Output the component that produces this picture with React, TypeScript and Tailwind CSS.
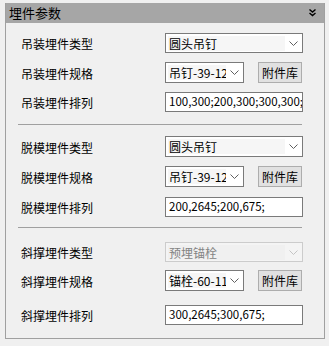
import React from 'react';

const cjk = { fontFamily: '"Noto Sans CJK SC", "Noto Sans", sans-serif' };

function Arrow({ disabled }: { disabled?: boolean }) {
  return (
    <svg width="9" height="5" viewBox="0 0 9 5" className="shrink-0">
      <path d="M0.5 0.5 L4.5 4.5 L8.5 0.5" fill="none" stroke={disabled ? '#c4c4c4' : '#606060'} strokeWidth="1" />
    </svg>
  );
}

function Combo({ text, small, disabled }: { text: string; small?: boolean; disabled?: boolean }) {
  return (
    <div
      className={`flex h-full items-center border ${disabled ? 'border-[#cccccc] bg-[#f4f4f4]' : 'border-[#7a7a7a] bg-white'} ${small ? 'w-[79px]' : 'w-[138px]'}`}
    >
      <div
        className={`ml-[2px] h-[15px] flex-1 overflow-hidden whitespace-nowrap pl-[1px] text-[12px] leading-[15px] ${disabled ? 'text-[#838383] bg-[#f0f0f0]' : 'text-black bg-[#f6f6f6]'}`}
      >
        {text}
      </div>
      <div className="flex w-[17px] justify-center">
        <Arrow disabled={disabled} />
      </div>
    </div>
  );
}

function Input({ value }: { value: string }) {
  return (
    <div className="flex h-full w-[138px] items-center overflow-hidden whitespace-nowrap border border-[#7a7a7a] bg-white pl-[3px] text-[11.5px] text-black">
      {value}
    </div>
  );
}

function Button() {
  return (
    <div className="ml-[14px] flex h-full w-[44px] items-center justify-center border border-[#adadad] bg-[#e1e1e1] text-[12px] text-black">
      附件库
    </div>
  );
}

function Row({ label, h, mt, children }: { label: string; h: string; mt: string; children: React.ReactNode }) {
  return (
    <div className={`flex items-center ${h} ${mt}`}>
      <div className="ml-[15px] w-[144px] pt-[2px] text-[12px] text-black">{label}</div>
      <div className="flex h-full items-center">{children}</div>
    </div>
  );
}

function Sep({ mt }: { mt: string }) {
  return <div className={`ml-[12px] h-px w-[284px] bg-[#a0a0a0] ${mt}`} />;
}

export default function App() {
  return (
    <div className="h-[346px] w-[329px] bg-[#f0f0f0] pt-[3px]" style={cjk}>
      <div className="ml-[5px] h-[336px] w-[320px] border border-t-0 border-[#a0a0a0]">
        <div className="flex h-[20px] items-center justify-between bg-[#a6a6a6] pl-[3px] pr-[8px]">
          <span className="text-[13px] leading-[20px] text-black">埋件参数</span>
          <svg width="7" height="8" viewBox="0 0 7 8">
            <path d="M0.5 0.5 L3.5 3 L6.5 0.5 M0.5 4 L3.5 6.5 L6.5 4" fill="none" stroke="#000" strokeWidth="1.4" />
          </svg>
        </div>

        <Row label="吊装埋件类型" h="h-[20px]" mt="mt-[10px]">
          <Combo text="圆头吊钉" />
        </Row>
        <Row label="吊装埋件规格" h="h-[21px]" mt="mt-[9px]">
          <Combo text="吊钉-39-12" small />
          <Button />
        </Row>
        <Row label="吊装埋件排列" h="h-[20px]" mt="mt-[9px]">
          <Input value="100,300;200,300;300,300;" />
        </Row>

        <Sep mt="mt-[12px]" />

        <Row label="脱模埋件类型" h="h-[21px]" mt="mt-[11px]">
          <Combo text="圆头吊钉" />
        </Row>
        <Row label="脱模埋件规格" h="h-[21px]" mt="mt-[9px]">
          <Combo text="吊钉-39-12" small />
          <Button />
        </Row>
        <Row label="脱模埋件排列" h="h-[20px]" mt="mt-[10px]">
          <Input value="200,2645;200,675;" />
        </Row>

        <Sep mt="mt-[10px]" />

        <Row label="斜撑埋件类型" h="h-[20px]" mt="mt-[14px]">
          <Combo text="预埋锚栓" disabled />
        </Row>
        <Row label="斜撑埋件规格" h="h-[21px]" mt="mt-[8px]">
          <Combo text="锚栓-60-11" small />
          <Button />
        </Row>
        <Row label="斜撑埋件排列" h="h-[20px]" mt="mt-[14px]">
          <Input value="300,2645;300,675;" />
        </Row>
      </div>
    </div>
  );
}
